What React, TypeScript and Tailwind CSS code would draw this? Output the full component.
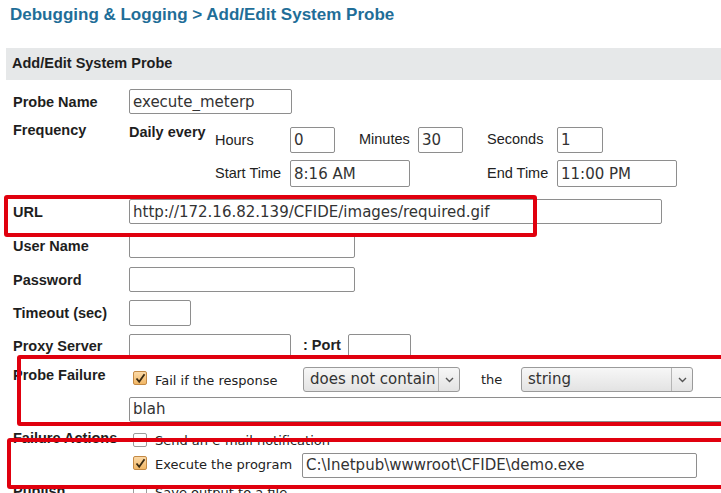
import React from 'react';

const lib = "font-['Liberation_Sans',Arial,sans-serif]";
const dv = "font-['DejaVu_Sans',sans-serif]";

function Field({ w, h = 25, value = '' }: { w: number; h?: number; value?: string }) {
  return (
    <input
      readOnly
      value={value}
      style={{ width: w, height: h }}
      className={`${dv} shrink-0 border border-[#8e8e8e] rounded-[2px] bg-white px-[3px] text-[15px] text-[#333] outline-none`}
    />
  );
}

function Check({ on = false }: { on?: boolean }) {
  return (
    <span
      className={`inline-flex shrink-0 w-[14px] h-[14px] items-center justify-center rounded-[2px] border ${
        on
          ? 'border-[#c48a45] bg-gradient-to-b from-[#fbd9a6] to-[#f1b765]'
          : 'border-[#9c9c9c] bg-white'
      }`}
    >
      {on && (
        <svg width="11" height="11" viewBox="0 0 11 11">
          <path d="M1.5 5.5 L4.2 8.8 L9.5 1.2" fill="none" stroke="#3a2a12" strokeWidth="1.8" />
        </svg>
      )}
    </span>
  );
}

function Select({ w, value }: { w: number; value: string }) {
  return (
    <div
      style={{ width: w }}
      className={`${dv} shrink-0 h-[25px] flex items-center border border-[#9a9a9a] rounded-[3px] bg-gradient-to-b from-[#f7f7f7] to-[#e3e3e3] text-[15px] text-[#333]`}
    >
      <span className="flex-1 pl-[6px] whitespace-nowrap overflow-hidden">{value}</span>
      <span className="w-[21px] h-full flex items-center justify-center border-l border-[#b5b5b5]">
        <svg width="9" height="6" viewBox="0 0 9 6">
          <path d="M1 1 L4.5 4.5 L8 1" fill="none" stroke="#555" strokeWidth="1.4" />
        </svg>
      </span>
    </div>
  );
}

function Label({ children }: { children: React.ReactNode }) {
  return (
    <div className={`${lib} w-[116px] shrink-0 font-bold text-[14.5px] leading-[16px] text-[#1e1e1e]`}>
      {children}
    </div>
  );
}

const txt = `${lib} text-[14.5px] text-[#222] whitespace-nowrap`;
const cbTxt = `${dv} text-[13px] text-[#222] whitespace-nowrap`;

export default function App() {
  return (
    <div className="relative w-[721px] h-[493px] overflow-hidden bg-white">
      <h1 className={`${lib} pt-[5px] pl-[10px] text-[17px] leading-[20px] font-bold text-[#1f6e98]`}>
        Debugging &amp; Logging &gt; Add/Edit System Probe
      </h1>

      <div className={`${lib} mt-[23px] ml-[6px] h-[32px] bg-[#e6e8e9] flex items-center pl-[6px] font-bold text-[14.5px] text-[#1e1e1e]`}>
        Add/Edit System Probe
      </div>

      <div className="pl-[13px]">
        {/* Probe name */}
        <div className="mt-[9px] flex items-center h-[25px]">
          <Label>Probe Name</Label>
          <Field w={163} value="execute_meterp" />
        </div>

        {/* Frequency */}
        <div className="mt-[8px] flex items-start">
          <Label>Frequency</Label>
          <div className={`${lib} w-[86px] shrink-0 pt-[2px] font-bold text-[14.5px] leading-[16px] text-[#1e1e1e]`}>
            Daily every
          </div>
          <div className="flex flex-col pt-[5px] gap-[7px]">
            <div className="flex items-center h-[26px]">
              <span className={`${txt} w-[75px] pt-[2px]`}>Hours</span>
              <Field w={45} h={26} value="0" />
              <span className={`${txt} ml-[24px] w-[59px]`}>Minutes</span>
              <Field w={45} h={26} value="30" />
              <span className={`${txt} ml-[24px] w-[70px]`}>Seconds</span>
              <Field w={46} h={26} value="1" />
            </div>
            <div className="flex items-center h-[27px]">
              <span className={`${txt} w-[75px]`}>Start Time</span>
              <Field w={120} h={27} value="8:16 AM" />
              <span className={`${txt} ml-[77px] w-[70px]`}>End Time</span>
              <Field w={120} h={27} value="11:00 PM" />
            </div>
          </div>
        </div>

        {/* URL */}
        <div className="mt-[12px] flex items-center h-[25px]">
          <Label>URL</Label>
          <Field w={533} value="http://172.16.82.139/CFIDE/images/required.gif" />
        </div>

        <div className="mt-[9px] flex items-center h-[25px]">
          <Label>User Name</Label>
          <Field w={226} />
        </div>

        <div className="mt-[9px] flex items-center h-[25px]">
          <Label>Password</Label>
          <Field w={226} />
        </div>

        <div className="mt-[8px] flex items-center h-[26px]">
          <Label>Timeout (sec)</Label>
          <Field w={62} h={26} />
        </div>

        <div className="mt-[8px] flex items-center h-[24px]">
          <Label>Proxy Server</Label>
          <Field w={162} h={24} />
          <span className={`${txt} ml-[12px] w-[45px] font-bold`}>: Port</span>
          <Field w={63} h={24} />
        </div>

        {/* Probe failure */}
        <div className="mt-[9px] flex items-start">
          <Label>Probe Failure</Label>
          <div className="flex flex-col">
            <div className="flex items-center h-[25px]">
              <span className="ml-[4px] mt-[-3px] flex"><Check on /></span>
              <span className={`${cbTxt} ml-[8px] w-[148px] pt-[2px]`}>Fail if the response</span>
              <Select w={157} value="does not contain" />
              <span className={`${cbTxt} ml-[21px] w-[40px]`}>the</span>
              <Select w={172} value="string" />
            </div>
            <div className="mt-[4px]">
              <Field w={620} value="blah" />
            </div>
          </div>
        </div>

        {/* Failure actions */}
        <div className="mt-[8px] flex items-start">
          <Label>Failure Actions</Label>
          <div className="flex flex-col pt-[2px]">
            <div className="flex items-center h-[16px]">
              <span className="ml-[4px] flex"><Check /></span>
              <span className={`${cbTxt} ml-[8px] pt-[3px]`}>Send an e-mail notification</span>
            </div>
            <div className="mt-[5px] flex items-center h-[25px]">
              <span className="ml-[4px] mt-[-4px] flex"><Check on /></span>
              <span className={`${cbTxt} ml-[8px] w-[147px]`}>Execute the program</span>
              <Field w={395} value="C:\Inetpub\wwwroot\CFIDE\demo.exe" />
            </div>
          </div>
        </div>

        <div className="mt-[5px] flex items-start">
          <Label>Publish</Label>
          <div className="flex items-center h-[16px] pt-[4px]">
            <span className="ml-[4px] flex"><Check /></span>
            <span className={`${cbTxt} ml-[8px]`}>Save output to a file</span>
          </div>
        </div>
      </div>

      {/* red annotation boxes drawn over the screenshot */}
      <div className="absolute left-[4px] top-[195px] w-[533px] h-[42px] border-[4px] border-[#e0000e] rounded-[3px]" />
      <div className="absolute left-[17px] top-[355px] w-[720px] h-[71px] border-[4px] border-[#e0000e] rounded-[3px]" />
      <div className="absolute left-[7px] top-[438px] w-[720px] h-[51px] border-[4px] border-[#e0000e] rounded-[3px]" />
    </div>
  );
}
